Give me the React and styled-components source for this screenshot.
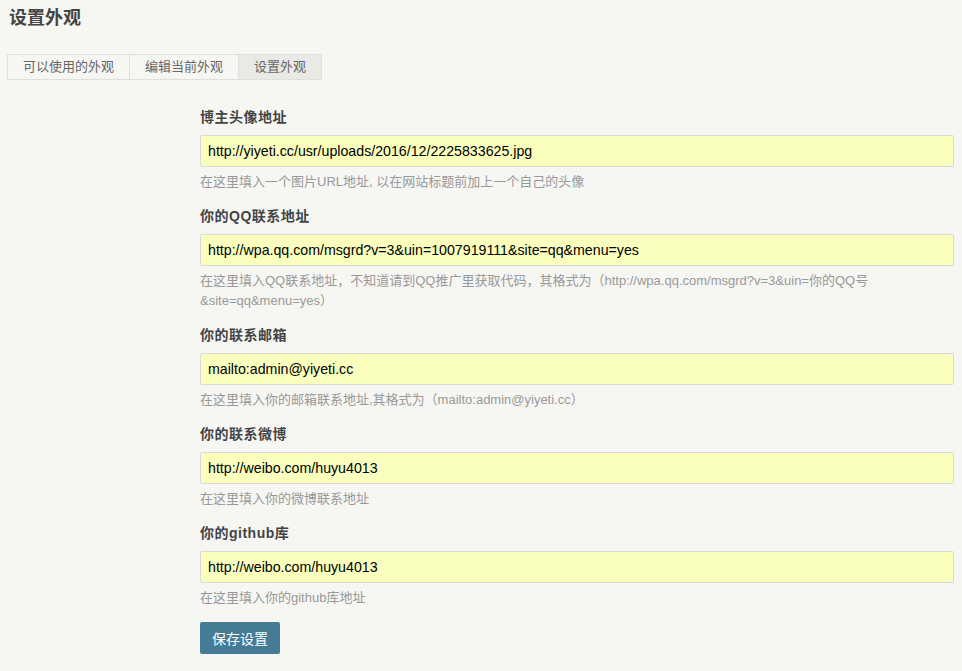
import React from "react";
import styled, { createGlobalStyle } from "styled-components";

const Global = createGlobalStyle`
  html, body { margin: 0; padding: 0; background: #f6f6f3; }
  body { font-family: "Liberation Sans", "Noto Sans CJK SC", sans-serif; color: #444; }
`;

const Page = styled.div`
  padding: 7px 0 0 0;
  width: 962px;
  height: 671px;
  box-sizing: border-box;
`;

const Title = styled.h2`
  margin: 0 0 0 9px;
  font-size: 18px;
  line-height: 22px;
  font-weight: bold;
  color: #444;
`;

const Tabs = styled.ul`
  list-style: none;
  margin: 25px 0 0 7px;
  padding: 0;
  display: flex;
`;

const Tab = styled.li`
  height: 24px;
  line-height: 24px;
  padding: 0 15px;
  font-size: 13px;
  color: #666;
  border: 1px solid #dfdfdc;
  border-left: ${(p) => (p.$first ? "1px solid #dfdfdc" : "none")};
  background: ${(p) => (p.$active ? "#e9e9e6" : "#f6f6f3")};
  width: ${(p) => p.$w}px;
  box-sizing: content-box;
  text-align: center;
`;

const Form = styled.form`
  margin: 27px 0 0 200px;
  width: 754px;
  display: flex;
  flex-direction: column;
  gap: 14px;
`;

const Field = styled.div`
  display: flex;
  flex-direction: column;
`;

const Label = styled.label`
  font-size: 14px;
  line-height: 20px;
  font-weight: bold;
  color: #444;
  margin-bottom: 8px;
  letter-spacing: 0.5px;
`;

const Input = styled.input`
  height: 32px;
  box-sizing: border-box;
  border: 1px solid #d9d9d6;
  border-radius: 2px;
  background: #faffbd;
  padding: 0 7px;
  font-family: "Liberation Sans", "Noto Sans CJK SC", sans-serif;
  font-size: 14.2px;
  color: #000;
  outline: none;
`;

const Desc = styled.p`
  margin: 5px 0 0 0;
  font-size: 13px;
  line-height: 20px;
  color: #999;
`;

const Button = styled.button`
  align-self: flex-start;
  height: 32px;
  padding: 0 12px;
  border: none;
  border-radius: 2px;
  background: #467b96;
  color: #fff;
  font-family: "Liberation Sans", "Noto Sans CJK SC", sans-serif;
  font-size: 14px;
`;

const fields = [
  {
    label: "博主头像地址",
    value: "http://yiyeti.cc/usr/uploads/2016/12/2225833625.jpg",
    desc: "在这里填入一个图片URL地址, 以在网站标题前加上一个自己的头像",
  },
  {
    label: "你的QQ联系地址",
    value: "http://wpa.qq.com/msgrd?v=3&uin=1007919111&site=qq&menu=yes",
    desc: "在这里填入QQ联系地址，不知道请到QQ推广里获取代码，其格式为（http://wpa.qq.com/msgrd?v=3&uin=你的QQ号&site=qq&menu=yes）",
  },
  {
    label: "你的联系邮箱",
    value: "mailto:admin@yiyeti.cc",
    desc: "在这里填入你的邮箱联系地址,其格式为（mailto:admin@yiyeti.cc）",
  },
  {
    label: "你的联系微博",
    value: "http://weibo.com/huyu4013",
    desc: "在这里填入你的微博联系地址",
  },
  {
    label: "你的github库",
    value: "http://weibo.com/huyu4013",
    desc: "在这里填入你的github库地址",
  },
];

export default function App() {
  return (
    <Page>
      <Global />
      <Title>设置外观</Title>
      <Tabs>
        <Tab $first $w={91}>可以使用的外观</Tab>
        <Tab $w={78}>编辑当前外观</Tab>
        <Tab $active $w={52}>设置外观</Tab>
      </Tabs>
      <Form onSubmit={(e) => e.preventDefault()}>
        {fields.map((f) => (
          <Field key={f.label}>
            <Label>{f.label}</Label>
            <Input defaultValue={f.value} />
            <Desc>{f.desc}</Desc>
          </Field>
        ))}
        <Button type="submit">保存设置</Button>
      </Form>
    </Page>
  );
}
